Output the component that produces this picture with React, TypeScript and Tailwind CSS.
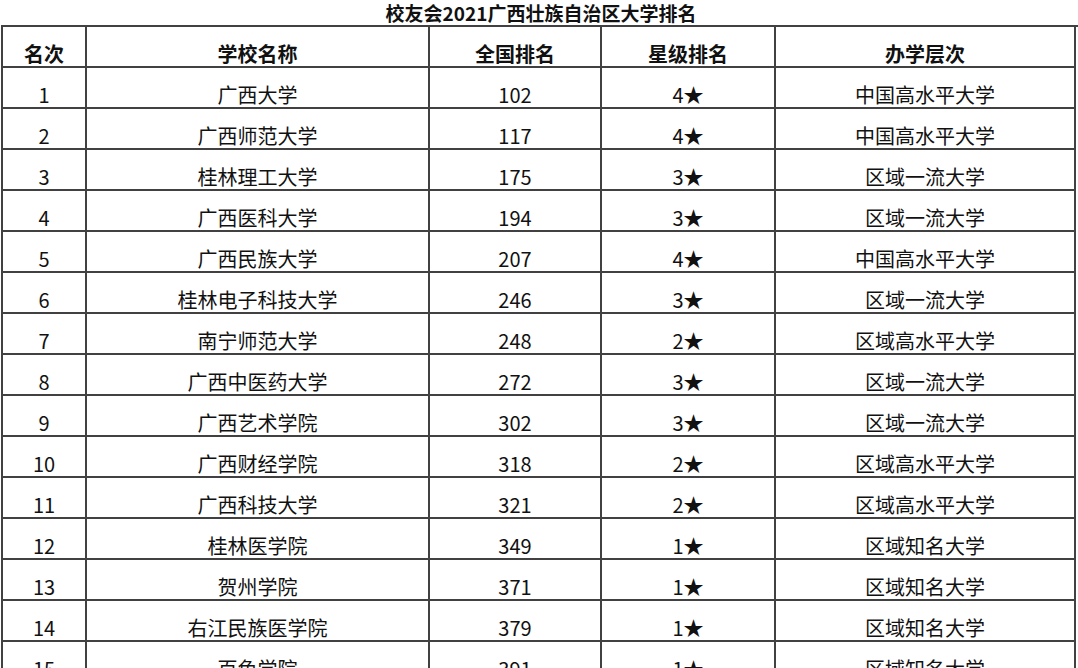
const rows: [string, string, string, string, string][] = [
  ["1", "广西大学", "102", "4★", "中国高水平大学"],
  ["2", "广西师范大学", "117", "4★", "中国高水平大学"],
  ["3", "桂林理工大学", "175", "3★", "区域一流大学"],
  ["4", "广西医科大学", "194", "3★", "区域一流大学"],
  ["5", "广西民族大学", "207", "4★", "中国高水平大学"],
  ["6", "桂林电子科技大学", "246", "3★", "区域一流大学"],
  ["7", "南宁师范大学", "248", "2★", "区域高水平大学"],
  ["8", "广西中医药大学", "272", "3★", "区域一流大学"],
  ["9", "广西艺术学院", "302", "3★", "区域一流大学"],
  ["10", "广西财经学院", "318", "2★", "区域高水平大学"],
  ["11", "广西科技大学", "321", "2★", "区域高水平大学"],
  ["12", "桂林医学院", "349", "1★", "区域知名大学"],
  ["13", "贺州学院", "371", "1★", "区域知名大学"],
  ["14", "右江民族医学院", "379", "1★", "区域知名大学"],
  ["15", "百色学院", "391", "1★", "区域知名大学"],
]

const headers = ["名次", "学校名称", "全国排名", "星级排名", "办学层次"]

function Cell({ children, bold }: { children: React.ReactNode; bold?: boolean }) {
  return (
    <div
      className={`h-[41px] flex items-end justify-center pb-[2px] border-r-2 border-b-2 border-[#414141] text-[20px] leading-[20px] text-[#111] whitespace-nowrap ${
        bold ? "font-bold" : "font-normal"
      }`}
    >
      {children}
    </div>
  )
}

export default function App() {
  return (
    <div
      className="w-[1078px] h-[668px] overflow-hidden bg-white"
      style={{ fontFamily: '"Noto Sans CJK SC", "Noto Sans", sans-serif' }}
    >
      <div className="h-[25px] flex items-center justify-center text-[19px] leading-[20px] font-bold text-[#111] pl-[4px]">
        校友会2021广西壮族自治区大学排名
      </div>
      <div className="ml-[1px] w-[1077px] border-t-2 border-l-2 border-[#414141] grid grid-cols-[84px_343px_172px_174px_300px]">
        {headers.map((h) => (
          <Cell key={h} bold>
            {h}
          </Cell>
        ))}
        {rows.map((r) =>
          r.map((v, i) => <Cell key={r[0] + "-" + i}>{v}</Cell>)
        )}
      </div>
    </div>
  )
}
